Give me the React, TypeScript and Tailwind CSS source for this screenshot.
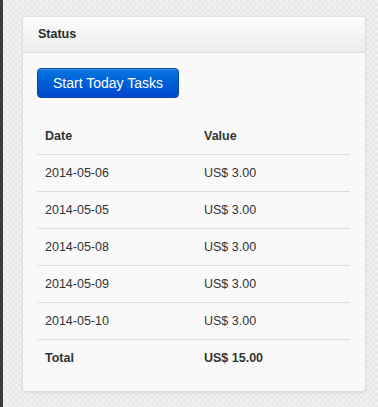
const rows = [
  { date: "2014-05-06", value: "US$ 3.00" },
  { date: "2014-05-05", value: "US$ 3.00" },
  { date: "2014-05-08", value: "US$ 3.00" },
  { date: "2014-05-09", value: "US$ 3.00" },
  { date: "2014-05-10", value: "US$ 3.00" },
];

export default function App() {
  return (
    <div className="flex h-[407px] w-[378px] overflow-hidden font-['Liberation_Sans',Arial,sans-serif] text-[#333]">
      <div className="w-[3px] shrink-0 bg-[#3b3b3b]" />
      <div className="flex-1 bg-[#ececec] bg-[conic-gradient(#e8e8e8_25%,#f1f1f1_0_50%,#e8e8e8_0_75%,#f1f1f1_0)] bg-[length:6px_6px] pt-4 pl-[19px] pr-3">
        <div className="w-[344px] overflow-hidden rounded-[4px] border border-[#dedede] bg-[#f9f9f9] shadow-[0_1px_2px_rgba(0,0,0,0.08)]">
          <div className="flex h-9 items-center border-b border-[#dcdcdc] bg-gradient-to-b from-[#fdfdfd] to-[#ececec] px-[15px]">
            <h3 className="text-[12.5px] font-bold text-[#2b2b2b]">Status</h3>
          </div>
          <div className="px-[14px] pt-[15px] pb-[15px]">
            <button className="h-[30px] rounded-[4px] border border-[#0747a6] bg-gradient-to-b from-[#0a77e0] to-[#0044cc] px-[15px] text-[14px] text-white shadow-[inset_0_1px_0_rgba(255,255,255,0.2)]">
              Start Today Tasks
            </button>
            <table className="mt-[19px] w-[313px] border-collapse text-[12.5px]">
              <thead>
                <tr>
                  <th className="h-[37px] w-[159px] px-2 pt-[3px] text-left font-bold">Date</th>
                  <th className="h-[37px] px-2 pt-[3px] text-left font-bold">Value</th>
                </tr>
              </thead>
              <tbody>
                {rows.map((r) => (
                  <tr key={r.date} className="border-t border-[#dddddd]">
                    <td className="h-[37px] px-2 pt-[2px]">{r.date}</td>
                    <td className="h-[37px] px-2 pt-[2px]">{r.value}</td>
                  </tr>
                ))}
                <tr className="border-t border-[#dddddd]">
                  <td className="h-[37px] px-2 pt-[2px] font-bold">Total</td>
                  <td className="h-[37px] px-2 pt-[2px] font-bold">US$ 15.00</td>
                </tr>
              </tbody>
            </table>
          </div>
        </div>
      </div>
    </div>
  );
}
